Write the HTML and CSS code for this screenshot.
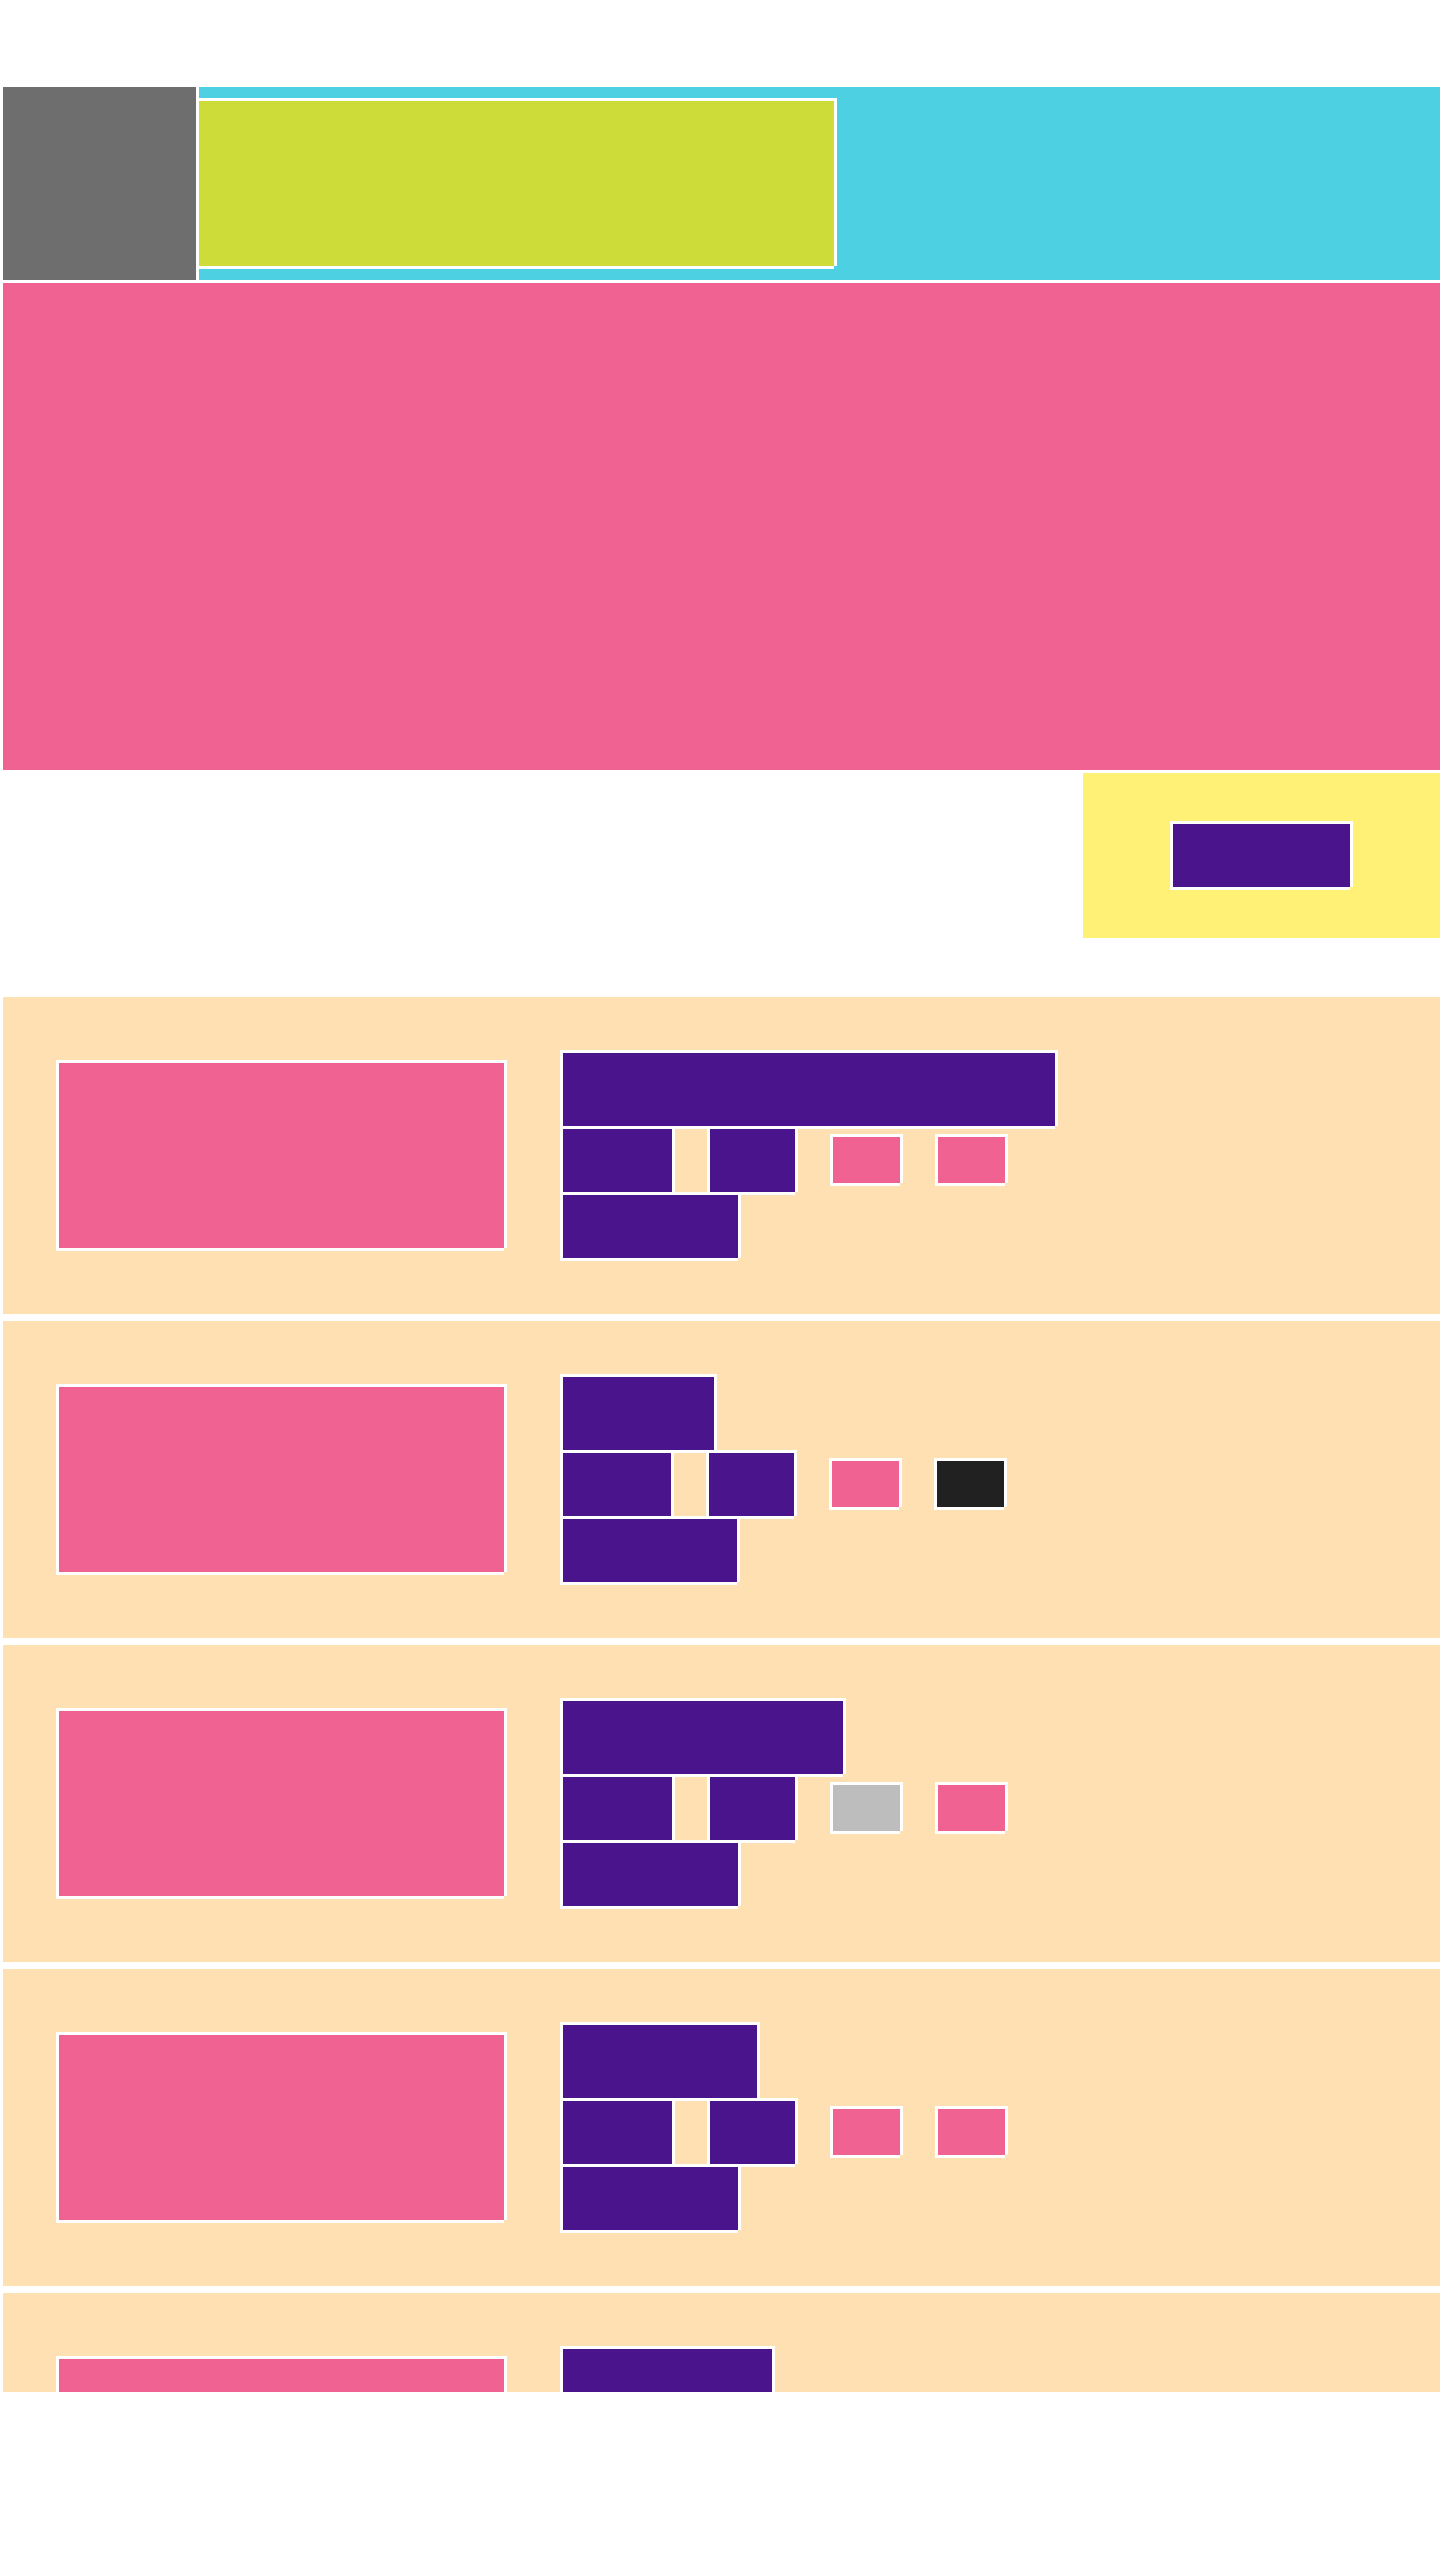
FILE: index.html
```html
<!DOCTYPE html>
<html lang="en">
<head>
<meta charset="utf-8">
<meta name="viewport" content="width=device-width, initial-scale=1">
<title>Layout blocks</title>
<link rel="stylesheet" href="styles.css">
</head>
<body>
<header class="topbar">
  <div class="topbar-icon"></div>
  <div class="topbar-title"></div>
</header>
<main class="content">
  <div class="hero"></div>
  <div class="toolbar">
    <div class="toolbar-action">
      <div class="label block"></div>
    </div>
  </div>
  <div class="list">
    <article class="card">
      <div class="thumb block"></div>
      <div class="details">
        <div class="title block" style="width: 495px"></div>
        <div class="meta">
          <div class="meta-name block"></div>
          <div class="meta-value block"></div>
          <div class="chip block"></div>
          <div class="chip block"></div>
        </div>
        <div class="note block"></div>
      </div>
    </article>
    <article class="card card-narrow">
      <div class="thumb block"></div>
      <div class="details">
        <div class="title block" style="width: 154px"></div>
        <div class="meta">
          <div class="meta-name block"></div>
          <div class="meta-value block"></div>
          <div class="chip block"></div>
          <div class="chip chip-dark block"></div>
        </div>
        <div class="note block"></div>
      </div>
    </article>
    <article class="card">
      <div class="thumb block"></div>
      <div class="details">
        <div class="title block" style="width: 283px"></div>
        <div class="meta">
          <div class="meta-name block"></div>
          <div class="meta-value block"></div>
          <div class="chip chip-muted block"></div>
          <div class="chip block"></div>
        </div>
        <div class="note block"></div>
      </div>
    </article>
    <article class="card">
      <div class="thumb block"></div>
      <div class="details">
        <div class="title block" style="width: 197px"></div>
        <div class="meta">
          <div class="meta-name block"></div>
          <div class="meta-value block"></div>
          <div class="chip block"></div>
          <div class="chip block"></div>
        </div>
        <div class="note block"></div>
      </div>
    </article>
    <article class="card">
      <div class="thumb block"></div>
      <div class="details">
        <div class="title block" style="width: 212px"></div>
        <div class="meta">
          <div class="meta-name block"></div>
          <div class="meta-value block"></div>
          <div class="chip block"></div>
          <div class="chip block"></div>
        </div>
        <div class="note block"></div>
      </div>
    </article>
  </div>
</main>
<footer class="bottombar"></footer>
</body>
</html>
```
FILE: styles.css
```css
:root {
  --line: #ffffff;
  --cyan: #4dd0e1;
  --lime: #cddc39;
  --pink: #f06292;
  --yellow: #fff176;
  --purple: #4a148c;
  --peach: #ffe0b2;
}

* {
  box-sizing: border-box;
}

body {
  display: flex;
  flex-direction: column;
  height: 100vh;
  margin: 0;
  padding: 87px 0 0 3px;
  background: var(--line);
  font-family: Roboto, sans-serif;
}

/* White outline on every side, open at the bottom right corner */
.block {
  border-top: 3px solid var(--line);
  border-left: 3px solid var(--line);
  box-shadow: 3px 0 0 var(--line), 0 3px 0 var(--line);
}

.topbar {
  display: flex;
  flex: none;
  height: 193px;
  background: var(--cyan);
}

.topbar-icon {
  flex: none;
  width: 196px;
  border-right: 3px solid var(--line);
  background: #6e6e6e;
}

.topbar-title {
  width: 635px;
  height: 168px;
  margin-top: 11px;
  border-top: 3px solid var(--line);
  box-shadow: 3px 0 0 var(--line), 0 3px 0 var(--line);
  background: var(--lime);
}

.content {
  display: flex;
  flex: 1;
  flex-direction: column;
  min-height: 0;
  padding-top: 3px;
  overflow: hidden;
}

.hero {
  flex: none;
  height: 487px;
  background: var(--pink);
}

.toolbar {
  display: flex;
  flex: none;
  justify-content: flex-end;
  margin: 3px 0 59px;
}

.toolbar-action {
  padding: 48px 90px 51px 87px;
  background: var(--yellow);
}

.label {
  width: 180px;
  height: 66px;
  background: var(--purple);
}

.list {
  display: flex;
  flex-direction: column;
  gap: 7px;
}

.card {
  display: flex;
  flex: none;
  align-items: center;
  gap: 56px;
  padding: 53px 53px 56px;
  background: var(--peach);
}

.thumb {
  flex: none;
  width: 448px;
  height: 188px;
  background: var(--pink);
}

.details {
  flex: 1;
  min-width: 0;
}

.title {
  height: 76px;
  background: var(--purple);
}

.meta {
  display: flex;
  align-items: flex-start;
  gap: 35px;
}

.meta-name,
.meta-value,
.note {
  height: 66px;
  background: var(--purple);
}

.meta-name {
  width: 112px;
}

.meta-value {
  width: 88px;
}

.note {
  width: 178px;
}

.card-narrow .meta-name {
  width: 111px;
}

.card-narrow .note {
  width: 177px;
}

.chip {
  width: 70px;
  height: 49px;
  margin-top: 8px;
  background: var(--pink);
}

.chip-dark {
  background: #212121;
}

.chip-muted {
  background: #bdbdbd;
}

.bottombar {
  flex: none;
  height: 168px;
}
```
